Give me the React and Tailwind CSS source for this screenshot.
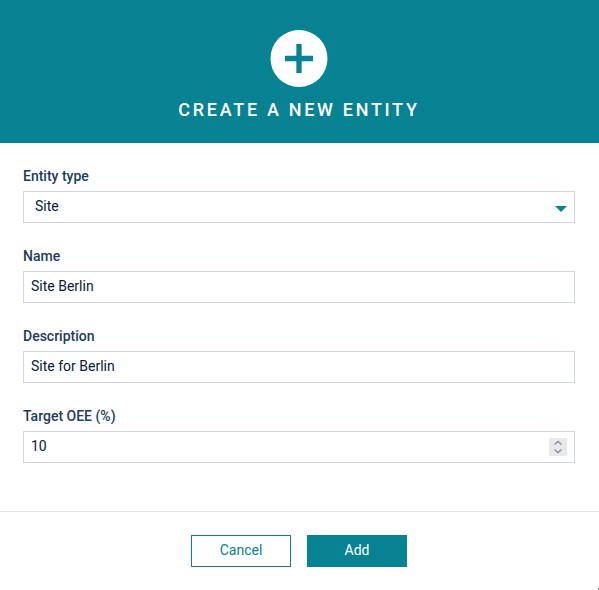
function Field({ label, children }) {
  return (
    <div className="mb-[23px]">
      <label className="block h-[25px] text-sm leading-5 font-medium text-[#1c3d5e]">{label}</label>
      <div className="flex h-8 items-center justify-between border border-[#d0d6e0] px-[7px] text-sm leading-5 text-[#04203f]">
        {children}
      </div>
    </div>
  );
}

export default function App() {
  return (
    <div className="flex h-[590px] w-[599px] flex-col overflow-hidden bg-white font-['Roboto',sans-serif]">
      <header className="flex h-[143px] flex-col items-center bg-[#068293] pt-[30px] pr-px">
        <svg width="58" height="58" viewBox="0 0 58 58">
          <circle cx="29" cy="28.5" r="28.5" fill="#fff" />
          <path d="M29 14v29M15 28.500h28" stroke="#068293" strokeWidth="5.300" />
        </svg>
        <h1 className="mt-2 text-lg leading-7 font-medium tracking-[2.7px] whitespace-nowrap text-white">CREATE A NEW ENTITY</h1>
      </header>
      <main className="h-[368px] pt-[23px] pr-[24px] pl-[23px]">
        <Field label="Entity type">
          <span className="pb-0.5 pl-1">Site</span>
          <svg className="mt-[4px]" width="12" height="6" viewBox="0 0 12 6"><path d="M0 0h12L6 6z" fill="#068293" /></svg>
        </Field>
        <Field label="Name"><span className="pb-0.5">Site Berlin</span></Field>
        <Field label="Description"><span className="pb-0.5">Site for Berlin</span></Field>
        <Field label="Target OEE (%)">
          <span className="pb-0.5">10</span>
          <svg width="18" height="18" viewBox="0 0 18 18">
            <path d="M0 0h18v18H0z" fill="#e9e9ed" />
            <path d="M5.500 6.500L9 3.500 12.500 6.500M5.500 11.500L9 14.500 12.500 11.500" fill="none" stroke="#8f8f9d" strokeWidth="1.500" />
          </svg>
        </Field>
      </main>
      <footer className="relative flex h-[79px] justify-center gap-4 border-t border-[#e2e4e6] pt-[23px] pr-px text-sm">
        <button className="h-8 w-[100px] border border-[#068293] pb-0.5 text-[#068293]">Cancel</button>
        <button className="h-8 w-[100px] bg-[#068293] pb-0.5 text-white">Add</button>
        <span className="absolute right-0 bottom-0 h-0.5 w-px bg-[#777]" />
      </footer>
    </div>
  );
}
